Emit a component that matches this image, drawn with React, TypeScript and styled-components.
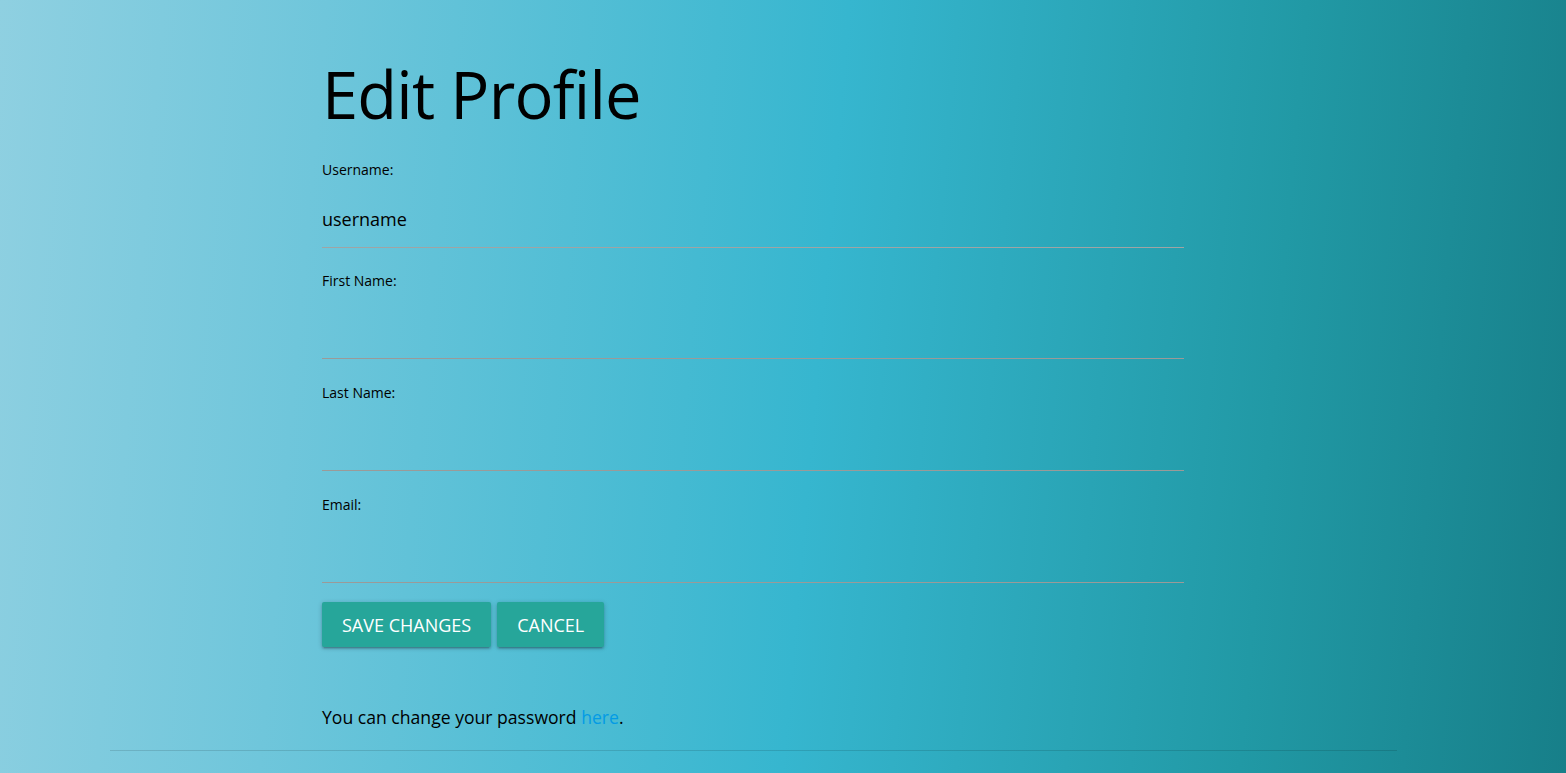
import React from "react";
import styled, { createGlobalStyle } from "styled-components";

const Global = createGlobalStyle`
  html, body { margin: 0; padding: 0; }
  body {
    font-family: "Open Sans", "Noto Sans", sans-serif;
    min-height: 773px;
    background: linear-gradient(95deg, #8fd0e1 0%, #6fc6db 20%, #36b6cf 52%, #2199a5 80%, #177f89 100%);
    color: #000;
  }
`;

const Page = styled.div`
  width: 1287px;
  margin-left: 110px;
  min-height: 773px;
  display: flex;
  flex-direction: column;
`;

const Column = styled.div`
  width: 862px;
  margin-left: 212px;
  display: flex;
  flex-direction: column;
`;

const Title = styled.h1`
  font-size: 65px;
  font-weight: 400;
  line-height: 66px;
  margin: 61px 0 34px;
  letter-spacing: -0.8px;
`;

const Field = styled.div<{ $gap?: number }>`
  display: flex;
  flex-direction: column;
  margin-bottom: ${(p) => p.$gap ?? 25}px;
`;

const Label = styled.label`
  font-size: 14px;
  line-height: 18px;
  height: 18px;
`;

const Input = styled.input`
  font-family: inherit;
  font-size: 18px;
  color: #000;
  background: transparent;
  border: 0 solid transparent;
  border-bottom: 1px solid #9b9a98;
  outline: none;
  padding: 12px 0 0;
  margin: 0;
  height: 69px;
  box-sizing: border-box;
  &:disabled {
    color: #000;
    opacity: 1;
    border-bottom-color: #a0a4a4;
  }
`;

const Buttons = styled.div`
  display: flex;
  gap: 6px;
  margin-top: -6px;
`;

const Button = styled.button`
  font-family: inherit;
  font-size: 18px;
  color: #fff;
  background: #26a69a;
  border: none;
  border-radius: 2px;
  height: 45px;
  padding: 0 20px;
  text-transform: uppercase;
  box-shadow: 0 2px 2px 0 rgba(0,0,0,0.14), 0 3px 1px -2px rgba(0,0,0,0.12), 0 1px 5px 0 rgba(0,0,0,0.2);
  cursor: pointer;
`;

const Note = styled.p`
  font-size: 17.6px;
  margin: 58px 0 0;
  line-height: 24px;
`;

const Link = styled.a`
  color: #039be5;
  text-decoration: none;
`;

const Rule = styled.hr`
  width: 100%;
  border: none;
  border-top: 1px solid rgba(0, 0, 0, 0.12);
  margin: 21px 0 0;
`;

export default function App() {
  return (
    <>
      <Global />
      <Page>
        <Column>
          <Title>Edit Profile</Title>
          <Field $gap={24}>
            <Label>Username:</Label>
            <Input defaultValue="username" disabled />
          </Field>
          <Field>
            <Label>First Name:</Label>
            <Input />
          </Field>
          <Field>
            <Label>Last Name:</Label>
            <Input />
          </Field>
          <Field>
            <Label>Email:</Label>
            <Input />
          </Field>
          <Buttons>
            <Button>Save Changes</Button>
            <Button>Cancel</Button>
          </Buttons>
          <Note>
            You can change your password <Link href="#">here</Link>.
          </Note>
        </Column>
        <Rule />
      </Page>
    </>
  );
}
